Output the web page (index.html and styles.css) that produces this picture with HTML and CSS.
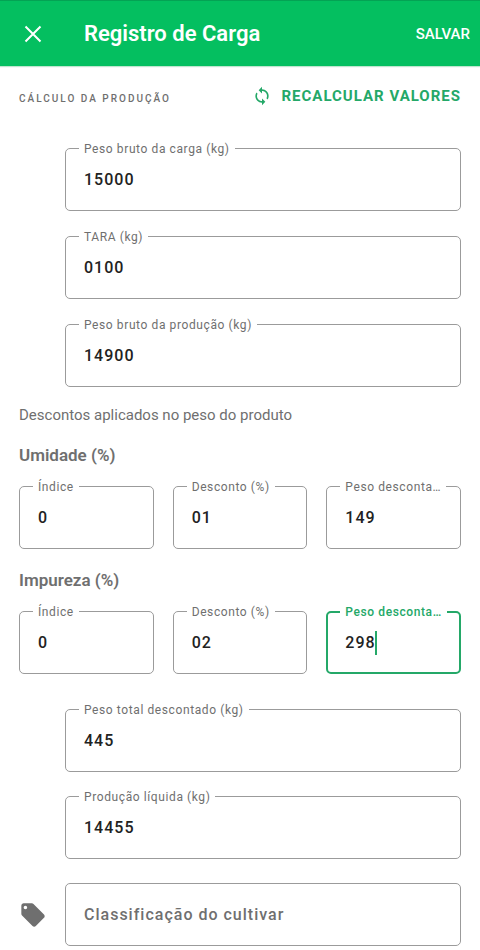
FILE: index.html
```html
<!DOCTYPE html>
<html lang="pt-BR">
<head>
<meta charset="utf-8">
<meta name="viewport" content="width=device-width, initial-scale=1">
<title>Registro de Carga</title>
<link rel="stylesheet" href="styles.css">
</head>
<body>
<header class="app-bar">
  <button class="close" type="button" aria-label="Fechar">
    <svg width="18" height="18" viewBox="0 0 18 18" fill="none" stroke="currentColor" stroke-width="2"><path d="M1.5 1.5l15 15M16.5 1.5l-15 15"/></svg>
  </button>
  <h1 class="title">Registro de Carga</h1>
  <button class="save" type="submit" form="load-form">SALVAR</button>
</header>
<main>
  <form id="load-form" class="form">
    <div class="section-head">
      <h2 class="overline">CÁLCULO DA PRODUÇÃO</h2>
      <button class="recalc" type="button">
        <svg width="20" height="20" viewBox="0 0 24 24" fill="currentColor"><path d="M12 4V1L8 5l4 4V6c3.310 0 6 2.690 6 6 0 1.010-.25 1.970-.7 2.800l1.460 1.460C19.540 15.030 20 13.570 20 12c0-4.420-3.580-8-8-8zm0 14c-3.310 0-6-2.690-6-6 0-1.010.25-1.970.7-2.800L5.240 7.740C4.460 8.970 4 10.430 4 12c0 4.420 3.580 8 8 8v3l4-4-4-4v3z"/></svg>
        <span>RECALCULAR VALORES</span>
      </button>
    </div>

    <div class="stack">
      <div class="field"><label for="gross">Peso bruto da carga (kg)</label><input id="gross" type="text" inputmode="numeric" value="15000"></div>
      <div class="field"><label for="tare">TARA (kg)</label><input id="tare" type="text" inputmode="numeric" value="0100"></div>
      <div class="field"><label for="production">Peso bruto da produção (kg)</label><input id="production" type="text" inputmode="numeric" value="14900"></div>
    </div>

    <p class="note">Descontos aplicados no peso do produto</p>

    <h3 class="group-title">Umidade (%)</h3>
    <div class="columns">
      <div class="field"><label for="hum-index">Índice</label><input id="hum-index" type="text" inputmode="numeric" value="0"></div>
      <div class="field"><label for="hum-discount">Desconto (%)</label><input id="hum-discount" type="text" inputmode="numeric" value="01"></div>
      <div class="field"><label for="hum-weight">Peso desconta…</label><input id="hum-weight" type="text" inputmode="numeric" value="149"></div>
    </div>

    <h3 class="group-title">Impureza (%)</h3>
    <div class="columns">
      <div class="field"><label for="imp-index">Índice</label><input id="imp-index" type="text" inputmode="numeric" value="0"></div>
      <div class="field"><label for="imp-discount">Desconto (%)</label><input id="imp-discount" type="text" inputmode="numeric" value="02"></div>
      <div class="field active"><label for="imp-weight">Peso desconta…</label><input id="imp-weight" type="text" inputmode="numeric" value="298"><span class="caret"></span></div>
    </div>

    <div class="stack totals">
      <div class="field"><label for="total">Peso total descontado (kg)</label><input id="total" type="text" inputmode="numeric" value="445"></div>
      <div class="field"><label for="net">Produção líquida (kg)</label><input id="net" type="text" inputmode="numeric" value="14455"></div>
      <div class="with-icon">
        <svg width="28" height="28" viewBox="0 0 24 24" fill="currentColor" aria-hidden="true"><path d="M21.410 11.580l-9-9C12.050 2.220 11.550 2 11 2H4c-1.100 0-2 .9-2 2v7c0 .55.22 1.050.59 1.420l9 9c.36.36.86.58 1.410.58s1.050-.22 1.410-.59l7-7c.37-.36.59-.86.59-1.410s-.23-1.060-.59-1.420zM5.500 7C4.670 7 4 6.330 4 5.500S4.670 4 5.500 4 7 4.670 7 5.500 6.330 7 5.500 7z"/></svg>
        <div class="field"><input id="cultivar" type="text" aria-label="Classificação do cultivar" placeholder="Classificação do cultivar"></div>
      </div>
    </div>
  </form>
</main>
</body>
</html>
```
FILE: styles.css
```css
* { box-sizing: border-box; }

:root {
  --bar: #04bf60;
  --accent: #24a868;
  --muted: #6f6f6f;
  --line: #9b9b9b;
}

body {
  margin: 0;
  background: #fff;
  color: #222;
  font-family: Roboto, "Liberation Sans", sans-serif;
  font-size: 16px;
}

h1, h2, h3, p { margin: 0; }

button {
  border: 0;
  padding: 0;
  background: none;
  color: inherit;
  font: inherit;
  cursor: pointer;
}

svg { display: block; }

.app-bar {
  display: flex;
  align-items: center;
  height: 66px;
  padding: 0 10px 0 24px;
  border-top: 1px solid #04a354;
  background: var(--bar);
  color: #fff;
  box-shadow: 0 1px 1px #bfe5cf;
}

.close { width: 60px; }

.title {
  flex: 1;
  font-size: 22px;
  line-height: 28px;
  font-weight: 600;
}

.save {
  font-size: 15px;
  font-weight: 500;
}

.form { padding: 16px 19px 4px; }

.section-head {
  display: flex;
  align-items: center;
  justify-content: space-between;
  height: 28px;
  margin-bottom: 38px;
}

.overline {
  padding-top: 4px;
  color: var(--muted);
  font-size: 10px;
  font-weight: 500;
  letter-spacing: 2px;
}

.recalc {
  display: flex;
  align-items: center;
  gap: 9px;
  color: var(--accent);
  font-size: 15px;
  font-weight: 700;
  letter-spacing: 1px;
}

.stack {
  display: grid;
  gap: 25px;
  padding-left: 46px;
}

.field {
  position: relative;
  min-width: 0;
  height: 63px;
  border: 1px solid var(--line);
  border-radius: 5px;
}

.field label {
  position: absolute;
  top: -8px;
  left: 13px;
  padding: 0 5px;
  background: #fff;
  color: var(--muted);
  font-size: 12px;
  line-height: 16px;
  letter-spacing: 0.05em;
  white-space: nowrap;
}

.field input {
  display: block;
  width: 100%;
  height: 100%;
  padding: 0 18px;
  border: 0;
  outline: 0;
  background: none;
  color: #222;
  font: 500 16px Roboto, "Liberation Sans", sans-serif;
  letter-spacing: 1px;
}

.field input::placeholder {
  color: var(--muted);
  opacity: 1;
}

.field.active { border: 2px solid var(--accent); }

.field.active label {
  top: -9px;
  left: 12px;
  color: var(--accent);
  font-weight: 500;
}

.field.active input { padding: 0 17px; }

.caret {
  position: absolute;
  top: 18px;
  left: 47px;
  width: 2px;
  height: 24px;
  background: var(--accent);
}

.note {
  margin-top: 18px;
  color: var(--muted);
  font-size: 15px;
  line-height: 20px;
}

.group-title {
  margin: 18px 0 19px;
  color: var(--muted);
  font-size: 17px;
  line-height: 24px;
  font-weight: 600;
}

.columns {
  display: grid;
  grid-template-columns: repeat(3, minmax(0, 1fr));
  gap: 19px;
}

.columns + .group-title { margin-top: 19px; }

.totals {
  gap: 24px;
  margin-top: 35px;
}

.with-icon {
  display: grid;
  grid-template-columns: 46px 1fr;
  align-items: center;
  margin-left: -46px;
  color: var(--muted);
}
```
